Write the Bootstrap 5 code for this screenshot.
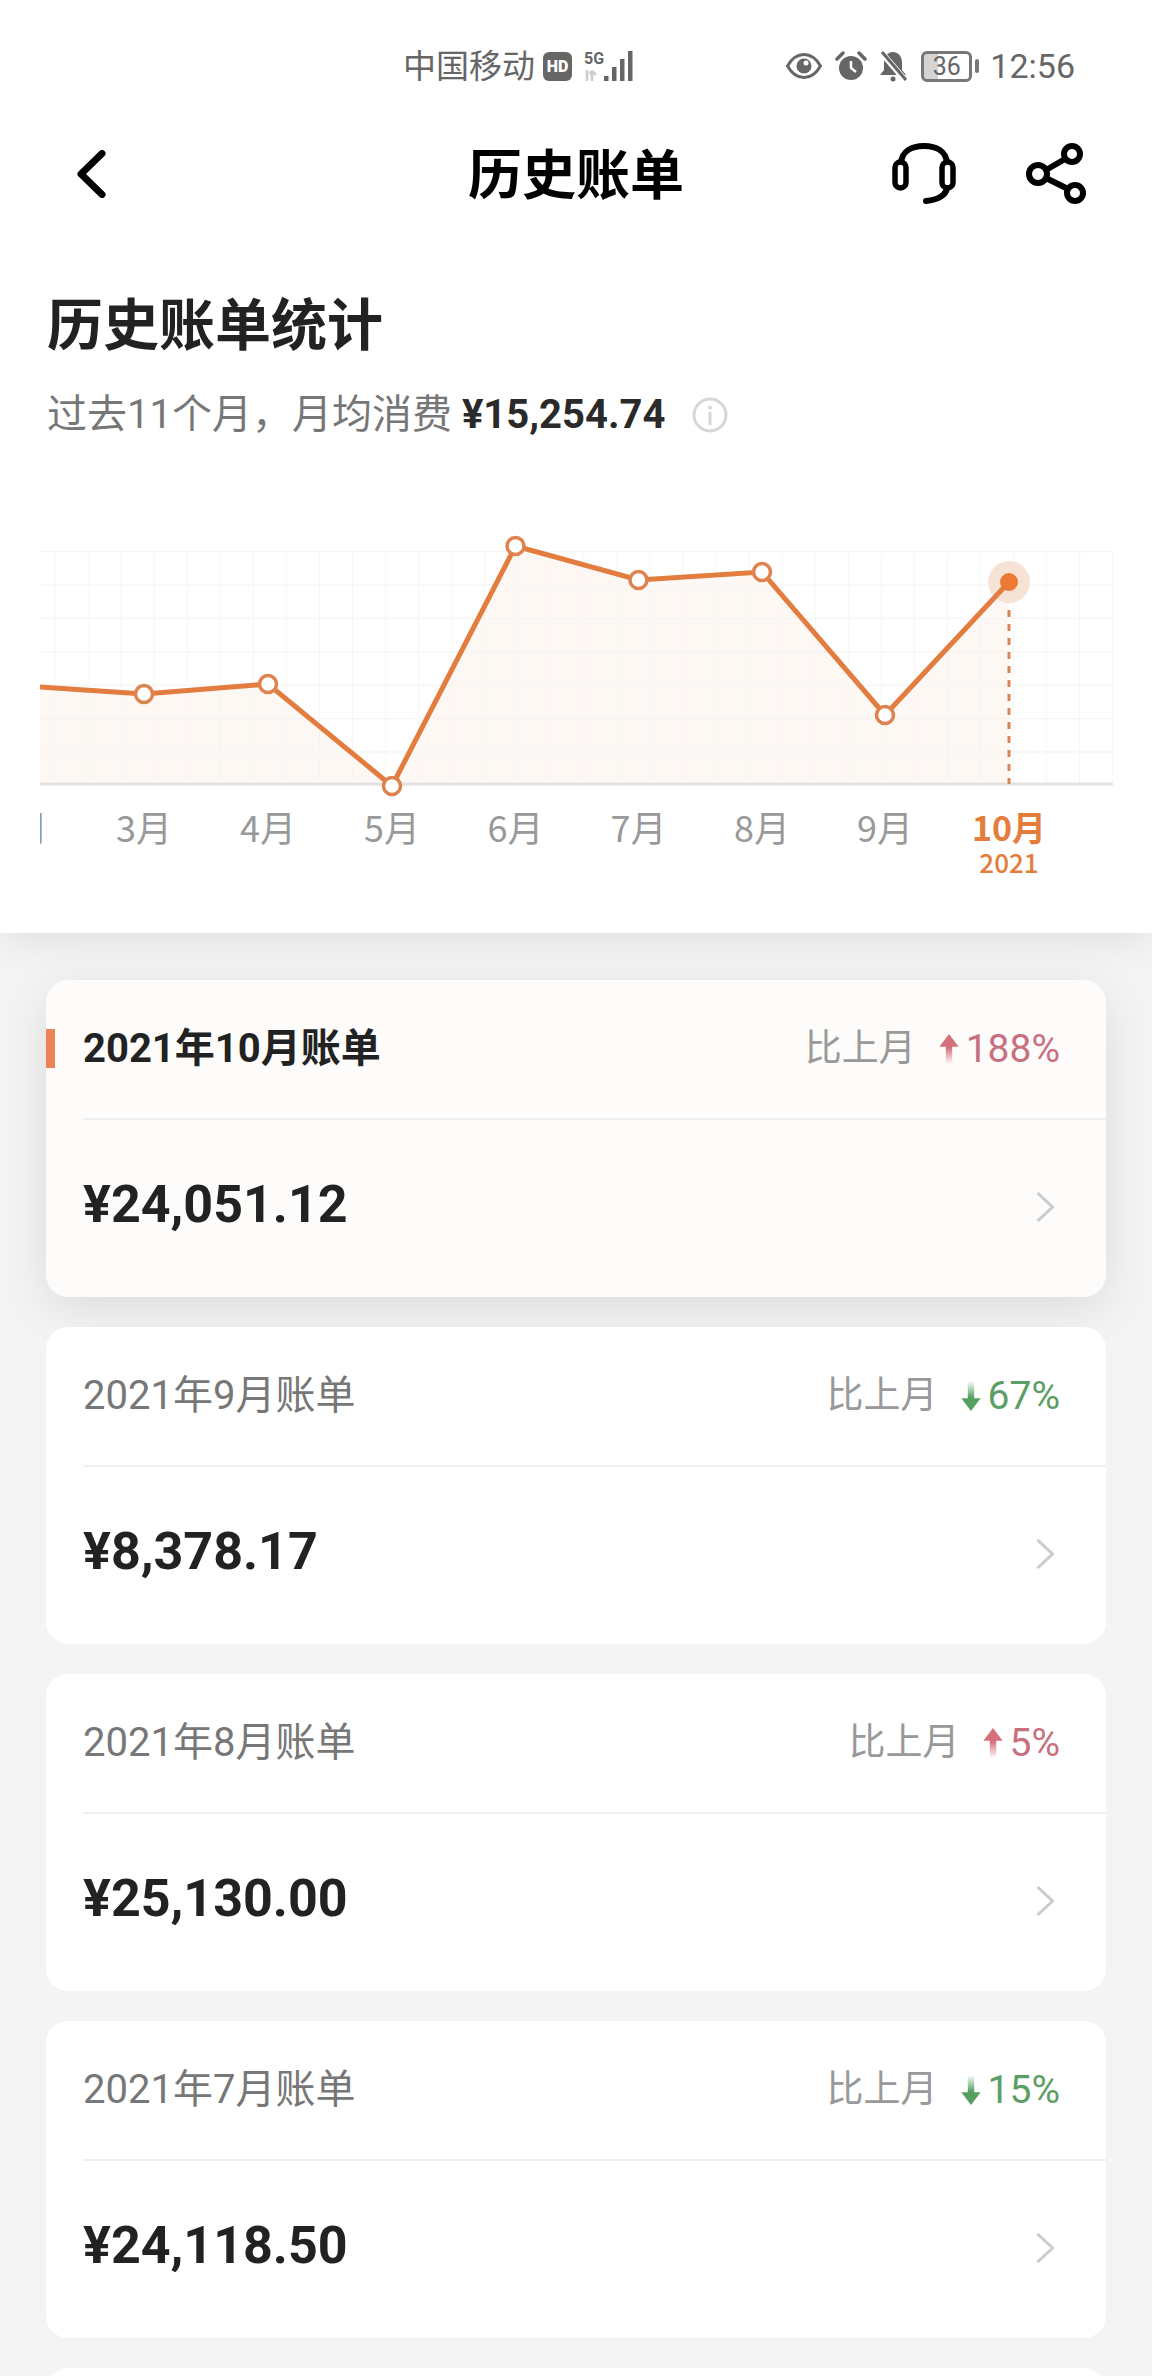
<!DOCTYPE html>
<html lang="zh">
<head>
<meta charset="utf-8">
<title>历史账单</title>
<link href="https://cdn.jsdelivr.net/npm/bootstrap@5.3.0/dist/css/bootstrap.min.css" rel="stylesheet">
<style>
html,body{height:2376px;overflow:hidden;}
body{background:#f4f4f4;font-family:Roboto,"Noto Sans CJK SC",sans-serif;color:#222;}
.panel-top{background:#fff;height:933px;box-shadow:0 6px 36px rgba(0,0,0,.09);position:relative;}
.status{height:132px;padding:0 77px 0 403px;color:#666;}
.carrier{font-size:33px;line-height:1;}
.clock{font-size:34px;line-height:1;margin-left:11px;}
.hd-tag{width:29px;height:29px;background:#666;color:#fff;font-size:16px;font-weight:900;line-height:29px;text-align:center;border-radius:6px;margin-left:8px;}
.batt{width:51px;height:31px;border:3px solid #777;border-radius:6px;font-size:25px;line-height:25px;text-align:center;color:#666;background:linear-gradient(90deg,#d4d4d4 30%,transparent 30%);margin-left:13px;}
.batt-tip{width:4px;height:14px;background:#777;border-radius:2px;margin-left:3px;}
.status-alarm{margin-left:13px;}
.status-bell{margin-left:11px;}
.status-net{margin-left:12px;}
.topbar{height:84px;padding-left:76px;position:relative;}
.page-title{position:absolute;left:0;right:0;top:-2px;line-height:84px;text-align:center;font-size:54px;font-weight:700;color:#000;margin:0;font-family:"Noto Sans CJK SC",sans-serif;}
.icon-headset{position:absolute;left:892px;top:11px;}
.icon-share{position:absolute;left:1026px;top:11px;}
.sec-title{font-size:56px;font-weight:700;line-height:70px;margin:70px 0 0 47px;font-family:"Noto Sans CJK SC",sans-serif;color:#222;}
.sec-sub{font-size:40px;line-height:50px;margin:34px 0 0 47px;color:#777;}
.sec-sub b{color:#2a2a2a;font-weight:700;font-size:40px;}
.info-dot{margin-left:27px;}
.chart-box{display:block;margin:67px 0 0 40px;}
.axis-label{font-family:"Noto Sans CJK SC",sans-serif;font-size:36px;fill:#999;text-anchor:middle;}
.axis-now{font-size:34px;font-weight:700;fill:#e47c3c;}
.axis-year{font-size:26px;font-weight:500;fill:#e47c3c;}
.bill-list{padding:47px 46px 0;}
.bill{height:317px;border:0;border-radius:22px;background:#fff;margin-bottom:30px;position:relative;}
.bill-now{background:#fdfcfa;box-shadow:0 12px 50px rgba(0,0,0,.1);}
.bill-head{height:140px;margin-left:37px;padding-right:46px;border-bottom:2px solid #f0f0f0;}
.bill-name{font-size:40px;color:#777;}
.bill-now .bill-name{font-weight:700;color:#222;}
.cmp{font-size:37px;color:#999;margin-right:23px;}
.arrow-mark{width:20px;height:30px;}
.pct{font-size:39px;margin-left:7px;}
.pct-up{color:#c8707f;}
.pct-down{color:#5c9e64;}
.bill-body{height:177px;margin-left:37px;padding-right:52px;}
.amount{font-size:52px;font-weight:700;color:#222;margin-top:-7px;}
.chev{margin-top:-4px;}
.mark-now{position:absolute;left:0;top:49px;width:9px;height:39px;background:#ec8256;}
</style>
</head>
<body>
<svg width="0" height="0" class="position-absolute">
<defs>
<linearGradient id="gUp" x1="0" y1="0" x2="0" y2="1"><stop offset="0" stop-color="#d4707c"/><stop offset=".45" stop-color="#d4707c"/><stop offset="1" stop-color="#d4707c" stop-opacity="0"/></linearGradient>
<linearGradient id="gDown" x1="0" y1="1" x2="0" y2="0"><stop offset="0" stop-color="#55a060"/><stop offset=".45" stop-color="#55a060"/><stop offset="1" stop-color="#55a060" stop-opacity="0"/></linearGradient>
<symbol id="up" viewBox="0 0 18 28"><path d="M9 0 18 12H12V28H6V12H0Z" fill="url(#gUp)"/></symbol>
<symbol id="down" viewBox="0 0 18 28"><path d="M9 28 18 16H12V0H6V16H0Z" fill="url(#gDown)"/></symbol>
<symbol id="next" viewBox="0 0 18 30"><path d="M1.500 1 16.500 15 1.500 29" fill="none" stroke="#ccc" stroke-width="3"/></symbol>
</defs>
</svg>

<div class="panel-top">
  <div class="status d-flex align-items-center">
    <span class="carrier">中国移动</span>
    <span class="hd-tag">HD</span>
    <svg class="status-net" width="50" height="32" viewBox="0 0 50 32">
      <text x="0" y="14" font-family="Roboto" font-weight="700" font-size="16" fill="#666">5G</text>
      <path d="M3 20V31M8 31V21M8 21 12 25M8 21 5.500 24" fill="none" stroke="#ccc" stroke-width="2.500"/>
      <g fill="#666"><rect x="20" y="26" width="4.500" height="5"/><rect x="28" y="17" width="4.500" height="14"/><rect x="36" y="9" width="4.500" height="22"/><rect x="44" y="1" width="4.500" height="30"/></g>
    </svg>
    <div class="ms-auto d-flex align-items-center">
      <svg width="36" height="28" viewBox="0 0 36 28"><path d="M1.500 14C6 6 12 2.500 18 2.500S30 6 34.500 14C30 22 24 25.500 18 25.500S6 22 1.500 14Z" fill="none" stroke="#666" stroke-width="3"/><circle cx="18" cy="14" r="7.500" fill="#666"/><circle cx="20" cy="11" r="2.500" fill="#fff"/></svg>
      <svg class="status-alarm" width="32" height="32" viewBox="0 0 32 32"><circle cx="16" cy="18" r="12" fill="#666"/><path d="M16 11V18L21 22" fill="none" stroke="#fff" stroke-width="2.500"/><path d="M2 9 8 3M30 9 24 3" stroke="#666" stroke-width="3.500" stroke-linecap="round"/></svg>
      <svg class="status-bell" width="30" height="32" viewBox="0 0 30 32"><path d="M15 2C9 2 6 7 6 13V20L2 25H28L24 20V13C24 7 21 2 15 2Z" fill="#666"/><circle cx="15" cy="29" r="2.500" fill="#666"/><path d="M3 2 27 30" stroke="#fff" stroke-width="6"/><path d="M4 2 28 30" stroke="#666" stroke-width="3"/></svg>
      <span class="batt">36</span><span class="batt-tip"></span>
      <span class="clock">12:56</span>
    </div>
  </div>

  <div class="topbar d-flex align-items-center">
    <h1 class="page-title">历史账单</h1>
    <svg width="30" height="48" viewBox="0 0 30 48"><path d="M26 3.500 5 24 26 44.500" fill="none" stroke="#000" stroke-width="7" stroke-linecap="round" stroke-linejoin="round"/></svg>
    <svg class="icon-headset" width="66" height="62" viewBox="0 0 66 62"><path d="M9 20C10 8 20 3 32 3S54 8 55 20" fill="none" stroke="#000" stroke-width="6"/><rect x="3" y="19" width="11" height="26" rx="5.500" fill="none" stroke="#000" stroke-width="5.500"/><rect x="50" y="19" width="11" height="26" rx="5.500" fill="none" stroke="#000" stroke-width="5.500"/><path d="M55 45C54 52 46 57 34 58" fill="none" stroke="#000" stroke-width="6" stroke-linecap="round"/></svg>
    <svg class="icon-share" width="60" height="62" viewBox="0 0 60 62"><g fill="none" stroke="#000" stroke-width="6"><circle cx="46" cy="11" r="8"/><circle cx="12" cy="31" r="9"/><circle cx="49" cy="50" r="8"/><path d="M39 16 20 27M20 35 42 46"/></g></svg>
  </div>

  <h2 class="sec-title">历史账单统计</h2>
  <p class="sec-sub d-flex align-items-center mb-0"><span>过去11个月，月均消费&nbsp;<b>¥15,254.74</b></span>
    <svg class="info-dot" width="36" height="36" viewBox="0 0 36 36"><circle cx="18" cy="18" r="16" fill="none" stroke="#d6d6d6" stroke-width="3"/><circle cx="18" cy="10.500" r="2" fill="#d6d6d6"/><rect x="16.500" y="15" width="3" height="13" fill="#d6d6d6"/></svg>
  </p>

  <svg class="chart-box" width="1073" height="395" viewBox="40 507 1073 395">
    <defs><pattern id="cells" patternUnits="userSpaceOnUse" x="22.500" y="551" width="33.050" height="33.400"><path d="M33.050 0V33.400M0 .5H33.050" fill="none" stroke="#f5f4f3" stroke-width="1.500"/></pattern></defs>
    <path d="M40 687 144 694 268 684 392 786 515.500 546 638.500 580 762 572 885 715 1009 582V784H40Z" fill="#fef8f4"/>
    <rect x="40" y="551" width="1073" height="233" fill="url(#cells)"/>
    <path d="M40 784H1113" stroke="#e3e3e3" stroke-width="3"/>
    <path d="M1009 582V784" stroke="#d98555" stroke-width="3" stroke-dasharray="7 7"/>
    <circle cx="1009" cy="582" r="21" fill="#f6e3d5"/>
    <path d="M40 687 144 694 268 684 392 786 515.500 546 638.500 580 762 572 885 715 1009 582" fill="none" stroke="#e27d3f" stroke-width="5"/>
    <g fill="#fff" stroke="#de8350" stroke-width="3.500"><circle cx="144" cy="694" r="8.500"/><circle cx="268" cy="684" r="8.500"/><circle cx="392" cy="786" r="8.500"/><circle cx="515.500" cy="546" r="8.500"/><circle cx="638.500" cy="580" r="8.500"/><circle cx="762" cy="572" r="8.500"/><circle cx="885" cy="715" r="8.500"/></g>
    <circle cx="1009" cy="582" r="9" fill="#ec7a35"/>
    <g><text class="axis-label" x="20" y="842">2月</text><text class="axis-label" x="144" y="842">3月</text><text class="axis-label" x="268" y="842">4月</text><text class="axis-label" x="392" y="842">5月</text><text class="axis-label" x="515.500" y="842">6月</text><text class="axis-label" x="638.500" y="842">7月</text><text class="axis-label" x="762" y="842">8月</text><text class="axis-label" x="885" y="842">9月</text><text class="axis-label axis-now" x="1009" y="841">10月</text><text class="axis-label axis-year" x="1009" y="873">2021</text></g>
  </svg>
</div>

<div class="bill-list">
  <div class="card bill bill-now"><span class="mark-now"></span>
    <div class="bill-head d-flex align-items-center justify-content-between"><span class="bill-name">2021年10月账单</span><span class="d-flex align-items-center"><span class="cmp">比上月</span><svg class="arrow-mark"><use href="#up"/></svg><span class="pct pct-up">188%</span></span></div>
    <div class="bill-body d-flex align-items-center justify-content-between"><span class="amount">¥24,051.12</span><svg class="chev" width="18" height="30"><use href="#next"/></svg></div>
  </div>
  <div class="card bill">
    <div class="bill-head d-flex align-items-center justify-content-between"><span class="bill-name">2021年9月账单</span><span class="d-flex align-items-center"><span class="cmp">比上月</span><svg class="arrow-mark"><use href="#down"/></svg><span class="pct pct-down">67%</span></span></div>
    <div class="bill-body d-flex align-items-center justify-content-between"><span class="amount">¥8,378.17</span><svg class="chev" width="18" height="30"><use href="#next"/></svg></div>
  </div>
  <div class="card bill">
    <div class="bill-head d-flex align-items-center justify-content-between"><span class="bill-name">2021年8月账单</span><span class="d-flex align-items-center"><span class="cmp">比上月</span><svg class="arrow-mark"><use href="#up"/></svg><span class="pct pct-up">5%</span></span></div>
    <div class="bill-body d-flex align-items-center justify-content-between"><span class="amount">¥25,130.00</span><svg class="chev" width="18" height="30"><use href="#next"/></svg></div>
  </div>
  <div class="card bill">
    <div class="bill-head d-flex align-items-center justify-content-between"><span class="bill-name">2021年7月账单</span><span class="d-flex align-items-center"><span class="cmp">比上月</span><svg class="arrow-mark"><use href="#down"/></svg><span class="pct pct-down">15%</span></span></div>
    <div class="bill-body d-flex align-items-center justify-content-between"><span class="amount">¥24,118.50</span><svg class="chev" width="18" height="30"><use href="#next"/></svg></div>
  </div>
  <div class="card bill"></div>
</div>
<script src="https://cdn.jsdelivr.net/npm/bootstrap@5.3.0/dist/js/bootstrap.bundle.min.js"></script>
</body>
</html>
